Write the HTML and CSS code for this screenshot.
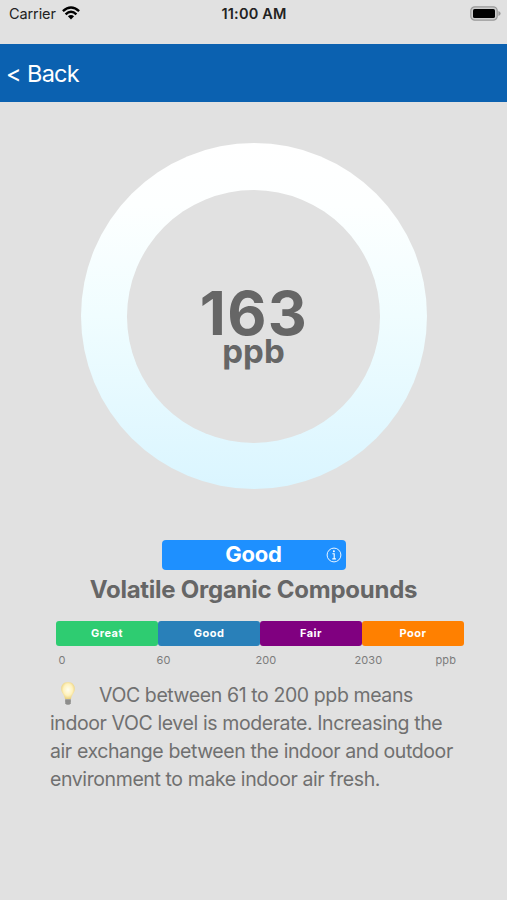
FILE: index.html
```html
<!DOCTYPE html>
<html lang="en">
<head>
<meta charset="utf-8">
<title>Volatile Organic Compounds</title>
<link rel="stylesheet" href="styles.css">
</head>
<body>
<div class="status">
  <div class="carrier"><span>Carrier</span>
    <svg class="wifi" viewBox="0 0 18 14" width="18" height="14"><g fill="none" stroke="#000" stroke-width="2.4"><path d="M.9 5.1Q9-2.3 17.1 5.1"/><path d="M3.6 8.4Q9 3.2 14.4 8.4"/></g><path d="M5.9 10.3Q9 7.5 12.1 10.3L9 13.6Z"/></svg>
  </div>
  <span class="time">11:00 AM</span>
  <svg class="battery" viewBox="0 0 31 15" width="31" height="15"><rect x=".8" y=".8" width="26.4" height="13.4" rx="4" fill="#ccc" stroke="#999" stroke-width="1.2"/><rect x="3" y="3" width="22" height="9" rx="1.6"/><path d="M28.4 5Q30.6 5.8 30.6 7.5T28.4 10Z" fill="#999"/></svg>
</div>
<header class="nav"><span class="back">&lt; Back</span></header>
<main>
  <div class="gauge">
    <div class="disc">
      <span class="value">163</span>
      <span class="unit">ppb</span>
    </div>
  </div>
  <div class="rating"><span></span><span class="rating-text">Good</span>
    <svg class="info" viewBox="0 0 16 16" width="16" height="16"><circle cx="8" cy="8" r="6.9" fill="none" stroke="#fff" stroke-width=".9"/><circle cx="7.9" cy="4.3" r="1" fill="#fff"/><path d="M6.4 6.7H8.2V11.9M6.3 11.9H9.9" fill="none" stroke="#fff" stroke-width="1.1"/></svg>
  </div>
  <h1>Volatile Organic Compounds</h1>
  <div class="scale">
    <span class="great">Great</span><span class="good">Good</span><span class="fair">Fair</span><span class="poor">Poor</span>
  </div>
  <div class="ticks"><span>0</span><span>60</span><span>200</span><span>2030</span><span>ppb</span></div>
  <div class="advice">
    <div class="line first"><svg class="bulb" viewBox="0 0 18 26" width="18" height="26"><defs><radialGradient id="glow" cx=".5" cy=".45" r=".6"><stop offset="0" stop-color="#fffef0"/><stop offset=".55" stop-color="#fff2bd"/><stop offset="1" stop-color="#e5c86c"/></radialGradient></defs><path d="M9 1C4.8 1 2.2 3.9 2.2 7.7C2.2 12.2 5.5 13.2 6 18.2H12C12.5 13.2 15.8 12.2 15.8 7.7C15.8 3.9 13.2 1 9 1Z" fill="url(#glow)"/><path d="M6.2 18H11.8V22.2L10.3 24H7.7L6.2 22.2Z" fill="#a5a5a2"/><path d="M6.2 20H11.8M6.5 22H11.5" stroke="#777"/></svg><span>VOC between 61 to 200 ppb means</span></div>
    <div class="line">indoor VOC level is moderate. Increasing the</div>
    <div class="line">air exchange between the indoor and outdoor</div>
    <div class="line">environment to make indoor air fresh.</div>
  </div>
</main>
</body>
</html>
```
FILE: styles.css
```css
* { box-sizing: border-box; }
body { margin: 0; height: 900px; overflow: hidden; background: #e1e1e1; font-family: Inter, "Liberation Sans", sans-serif; color: #666; }
.status { display: grid; grid-template-columns: 1fr auto 1fr; height: 43.5px; padding: 0 6px 0 9px; color: #222; font-size: 14.5px; line-height: 28px; align-items: start; }
.carrier { display: flex; gap: 6px; letter-spacing: -0.1px; }
.wifi { margin-top: 6px; }
.time { font-weight: 600; letter-spacing: 0.2px; margin-right: 2px; }
.battery { margin-top: 6px; justify-self: end; }
.nav { height: 58.5px; background: #0b61b0; color: #fff; padding: 2px 0 0 6px; display: flex; align-items: center; font-size: 23.5px; letter-spacing: -0.8px; word-spacing: 0.5px; }
main { display: flex; flex-direction: column; align-items: center; }
.gauge { width: 346px; height: 346px; margin-top: 41px; padding: 46.5px; border-radius: 50%; background: linear-gradient(#fff 0%, #fdffff 18%, #f0fdff 50%, #daf5ff 100%); }
.disc { height: 100%; border-radius: 50%; background: #e1e1e1; display: flex; flex-direction: column; align-items: center; padding-top: 101px; font-weight: 700; }
.value { display: block; font-size: 60.5px; line-height: 45px; height: 45px; letter-spacing: 1.3px; margin-left: 1px; }
.unit { display: block; font-size: 33px; line-height: 33px; letter-spacing: 0; margin-top: -1px; }
.rating { width: 184px; height: 30px; margin-top: 51px; padding-right: 4px; border-radius: 4px; background: #1e90ff; color: #fff; display: grid; grid-template-columns: 20px 1fr 16px; align-items: center; text-align: center; font-size: 22px; font-weight: 700; letter-spacing: -0.2px; }
.rating-text { line-height: 28px; padding-bottom: 2px; }
h1 { margin: 4px 0 0; font-size: 24px; line-height: 32px; font-weight: 700; letter-spacing: -0.25px; white-space: nowrap; }
.scale { display: grid; grid-template-columns: repeat(4, 1fr); width: 408px; height: 25px; margin: 15px 0 0 13px; color: #fff; font-size: 11px; line-height: 25px; font-weight: 700; letter-spacing: 0.5px; text-align: center; }
.scale span { border-radius: 3px; }
.great { background: #2ecc71; }
.good { background: #2980b9; }
.fair { background: #800080; }
.poor { background: #ff8000; }
.ticks { display: grid; grid-template-columns: 98px 99px 99px 81px auto; width: 398px; margin: 6px 0 0 8px; font-size: 11px; line-height: 16px; letter-spacing: 0.1px; color: #7c7c7c; }
.advice { width: 407px; margin-top: 13px; font-size: 19.5px; line-height: 28px; letter-spacing: -0.4px; color: #707070; white-space: nowrap; }
.line { height: 28px; }
.first { display: flex; padding-left: 9px; }
.bulb { margin: 0 22px 0 0; }
```
